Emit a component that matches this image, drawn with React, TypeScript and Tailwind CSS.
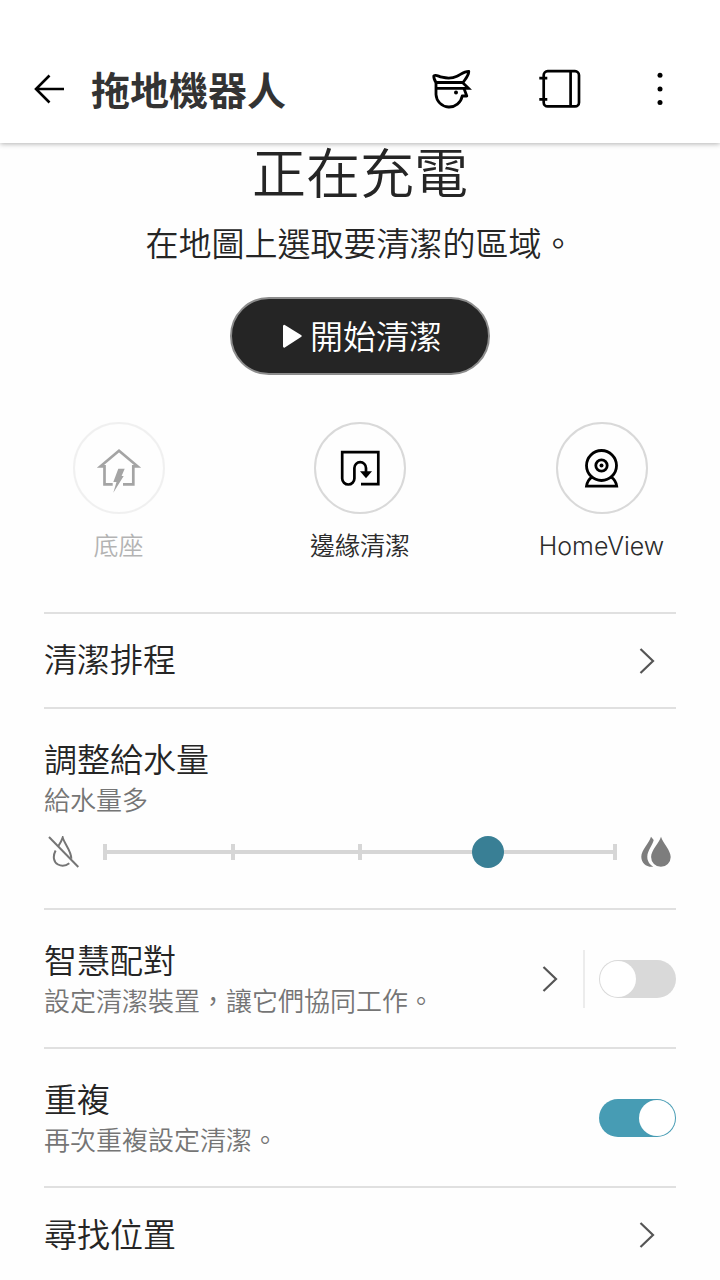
import { useState, type ReactNode } from 'react'

function BackIcon() {
  return (
    <svg className="h-9 w-9" viewBox="0 0 36 36" fill="none" stroke="currentColor" strokeWidth="2.6">
      <path d="M32 17H4M17.500 3.500L4 17l13.500 13.500" />
    </svg>
  )
}

function HomeGuardIcon() {
  return (
    <svg className="h-12 w-12" viewBox="0 1 48 48" fill="none" stroke="currentColor" strokeWidth="2.800" strokeLinejoin="round">
      <path d="M8 17.500C6.200 14.500 5.600 12.500 5.800 10.800C8 9.300 10 11.200 14 12.200C19 13.400 24 13.600 29 11.300C33 9.400 36 6.300 40.800 6.400C40.700 10.500 37.500 14 35 17.500Z" />
      <path d="M8 17.500V29.500a13.200 13.200 0 0 0 26.200 1.500H38.800l-2.800-7.500" />
      <path d="M8 23.300H40.500L34.500 17.500" strokeLinejoin="miter" />
      <circle cx="28" cy="27.500" r="2" fill="currentColor" stroke="none" />
    </svg>
  )
}

function DiaryIcon() {
  return (
    <svg className="h-12 w-12" viewBox="0 1 48 48" fill="none" stroke="currentColor" strokeWidth="2.700">
      <rect x="7.700" y="6.200" width="35.300" height="35.200" rx="4" />
      <path d="M34.600 6.200V41.400M3.300 13.200H11.300M3.300 34.400H11.300" />
    </svg>
  )
}

function MoreIcon() {
  return (
    <svg className="h-12 w-8" viewBox="0 1 32 48" fill="currentColor">
      <circle cx="16" cy="10.300" r="2.500" />
      <circle cx="16" cy="23.900" r="2.500" />
      <circle cx="16" cy="37.500" r="2.500" />
    </svg>
  )
}

function DockIcon() {
  return (
    <svg className="h-12 w-12 overflow-visible" viewBox="0 0 48 48" fill="none" stroke="currentColor" strokeWidth="2.700">
      <path d="M17.700 40.400H9.500V22.300H5.500L24 6.800L42.500 22.300H38.300V40.400H28" />
      <path d="M23.300 24.700H29.700L26.600 32H28.700L18.300 48.700L21.500 38H18.300Z" fill="currentColor" stroke="none" />
    </svg>
  )
}

function EdgeIcon() {
  return (
    <svg className="h-12 w-12" viewBox="0 0 48 48" fill="none" stroke="currentColor" strokeWidth="2.700">
      <path d="M25 40.200H42.300V8.200H6.200V34.400a6.100 6.100 0 0 0 12.200 0V24a5.800 5.800 0 0 1 11.600 0V28" />
      <path d="M24 27.300H36L30 34.200Z" fill="currentColor" stroke="none" />
    </svg>
  )
}

function CameraIcon() {
  return (
    <svg className="h-12 w-12" viewBox="0 0 48 48" fill="none" stroke="currentColor" strokeWidth="2.800">
      <circle cx="23.500" cy="21.500" r="15" />
      <circle cx="23.500" cy="21.500" r="5.700" />
      <circle cx="23.500" cy="21.500" r="2" fill="currentColor" stroke="none" />
      <path d="M13.700 33.200C10.700 35.500 9 38.500 8.500 42.200H38.700C38.200 38.500 36.500 35.500 33.300 33.200" />
    </svg>
  )
}

function WaterOffIcon() {
  return (
    <svg className="h-8 w-8 shrink-0" viewBox="0 0 32 32" fill="none" stroke="#757575" strokeWidth="2">
      <path d="M2 1L31.300 31" />
      <path d="M11.400 10C13 7.500 14.800 4.500 15.700 1.500C17.500 8 24.500 15 24.300 22.700" />
      <path d="M8.600 14.500C5.500 20.500 6.600 26 11 28.500C14.500 30.400 19 29.800 22.300 27.200" />
    </svg>
  )
}

function WaterFullIcon() {
  return (
    <svg className="h-8 w-8 shrink-0" viewBox="0 0 32 32" fill="#7d7d7d">
      <path d="M20 .7C22 7.500 29.700 14 29.700 21a9.800 9.800 0 0 1-19.600 0C10.100 14 18 7.500 20 .7Z" />
      <path d="M10 .7L12.700 4C11.500 9.500 6.500 14.500 6.300 20.500C6.200 25 8.500 28.500 12.300 30.700C5.500 31.500 .3 27 .3 20.700C.3 14 8 7.500 10 .7Z" />
    </svg>
  )
}

function Chevron() {
  return (
    <svg className="h-7 w-4 shrink-0" viewBox="0 0 16 28" fill="none" stroke="#555555" strokeWidth="2.200">
      <path d="M1.500 2L14 14L1.500 26" />
    </svg>
  )
}

interface ActionProps {
  label: string
  icon: ReactNode
  disabled?: boolean
}

function Action({ label, icon, disabled }: ActionProps) {
  return (
    <button type="button" disabled={disabled} className="flex w-[149px] flex-col items-center gap-3 text-black disabled:opacity-35">
      <span className="flex h-[92px] w-[92px] items-center justify-center rounded-full border-2 border-[#d9d9d9]">
        {icon}
      </span>
      <span className="font-['Inter','Noto_Sans_CJK_TC',sans-serif] text-[25px] leading-[40px] text-[#2b2b2b]">{label}</span>
    </button>
  )
}

interface SwitchProps {
  id: string
  checked: boolean
  onChange: (checked: boolean) => void
}

function Switch({ id, checked, onChange }: SwitchProps) {
  return (
    <input
      id={id}
      type="checkbox"
      role="switch"
      checked={checked}
      onChange={(e) => onChange(e.target.checked)}
      className="flex h-[38px] w-[77px] shrink-0 cursor-pointer appearance-none rounded-full bg-[#d9d9d9] p-px before:h-9 before:w-9 before:rounded-full before:bg-white checked:justify-end checked:bg-[#479cb4]"
    />
  )
}

export default function App() {
  const [water, setWater] = useState(3)
  const [pairing, setPairing] = useState(false)
  const [repeat, setRepeat] = useState(true)

  return (
    <div className="min-h-screen bg-[#fefefe] font-['Noto_Sans_CJK_TC',sans-serif] font-[350] text-[#252525]">
      <header className="sticky top-0 z-10 flex h-[143px] items-center bg-white pt-9 pr-11 pl-8 shadow-[0_1px_5px_rgba(0,0,0,0.3)]">
        <button type="button" aria-label="返回" className="text-black">
          <BackIcon />
        </button>
        <h1 className="ml-[23px] flex-1 pb-1 text-[39px] leading-[56px] font-bold text-[#333333]">拖地機器人</h1>
        <div className="flex items-center gap-15 text-black">
          <button type="button" aria-label="HomeGuard"><HomeGuardIcon /></button>
          <button type="button" aria-label="日誌"><DiaryIcon /></button>
          <button type="button" aria-label="更多"><MoreIcon /></button>
        </div>
      </header>

      <main className="px-11">
        <section className="flex flex-col items-center">
          <h2 className="text-[54px] leading-[56px]">正在充電</h2>
          <p className="mt-[18px] text-[33px] leading-[50px]">在地圖上選取要清潔的區域。</p>
          <button
            type="button"
            className="mt-[30px] flex h-[78px] w-[260px] items-center justify-center gap-2 rounded-full border-2 border-[#8c8c8c] bg-[#252525] pl-1 text-[33px] text-white"
          >
            <svg className="h-7 w-5" viewBox="0 0 20 28" fill="currentColor">
              <path d="M1 4a1.200 1.200 0 0 1 1.800-1L19 13a1.200 1.200 0 0 1 0 2L2.800 25.500A1.200 1.200 0 0 1 1 24.500Z" />
            </svg>
            開始清潔
          </button>
        </section>

        <section className="mt-[47px] mb-[46px] flex justify-between">
          <Action label="底座" icon={<DockIcon />} disabled />
          <Action label="邊緣清潔" icon={<EdgeIcon />} />
          <Action label="HomeView" icon={<CameraIcon />} />
        </section>

        <a href="#schedule" className="flex h-[95px] items-center justify-between border-t-2 border-[#e0e0e0] pr-[21px] text-[33px]">
          <span className="pb-1">清潔排程</span>
          <Chevron />
        </a>

        <section className="border-t-2 border-[#e0e0e0] pt-[27px] pb-10">
          <label htmlFor="water" className="block text-[33px] leading-[44px]">調整給水量</label>
          <p className="text-[26px] leading-[38px] text-[#757575]">給水量多</p>
          <div className="mt-[18px] flex items-center justify-between pr-[3px] pl-[3px]">
            <WaterOffIcon />
            <div className="relative mx-[9px] flex h-8 flex-1 items-center">
              <div className="absolute inset-x-[15px] flex h-4 items-center justify-between">
                <div className="absolute inset-x-0 h-1 bg-[#d6d6d6]" />
                <span className="h-4 w-1 bg-[#d6d6d6]" />
                <span className="h-4 w-1 bg-[#d6d6d6]" />
                <span className="h-4 w-1 bg-[#d6d6d6]" />
                <span className="h-4 w-1 bg-[#d6d6d6]" />
                <span className="h-4 w-1 bg-[#d6d6d6]" />
              </div>
              <input
                id="water"
                type="range"
                min={0}
                max={4}
                value={water}
                onChange={(e) => setWater(Number(e.target.value))}
                className="relative h-8 w-full cursor-pointer appearance-none bg-transparent [&::-webkit-slider-thumb]:h-8 [&::-webkit-slider-thumb]:w-8 [&::-webkit-slider-thumb]:appearance-none [&::-webkit-slider-thumb]:rounded-full [&::-webkit-slider-thumb]:bg-[#397f95]"
              />
            </div>
            <WaterFullIcon />
          </div>
        </section>

        <section className="flex h-[139px] items-center border-t-2 border-[#e0e0e0]">
          <label htmlFor="pairing" className="flex-1 pb-0.5">
            <span className="block text-[33px] leading-[44px]">智慧配對</span>
            <span className="block text-[26px] leading-[38px] text-[#757575]">設定清潔裝置，讓它們協同工作。</span>
          </label>
          <a href="#pairing" aria-label="智慧配對" className="border-r-2 border-[#ececec] py-[15px] pr-[25px]">
            <Chevron />
          </a>
          <div className="ml-[14px]">
            <Switch id="pairing" checked={pairing} onChange={setPairing} />
          </div>
        </section>

        <section className="flex h-[139px] items-center border-t-2 border-[#e0e0e0]">
          <label htmlFor="repeat" className="flex-1 pb-0.5">
            <span className="block text-[33px] leading-[44px]">重複</span>
            <span className="block text-[26px] leading-[38px] text-[#757575]">再次重複設定清潔。</span>
          </label>
          <Switch id="repeat" checked={repeat} onChange={setRepeat} />
        </section>

        <a href="#location" className="flex h-[95px] items-center justify-between border-t-2 border-[#e0e0e0] pr-[21px] text-[33px]">
          <span className="pb-0.5">尋找位置</span>
          <Chevron />
        </a>
      </main>
    </div>
  )
}
